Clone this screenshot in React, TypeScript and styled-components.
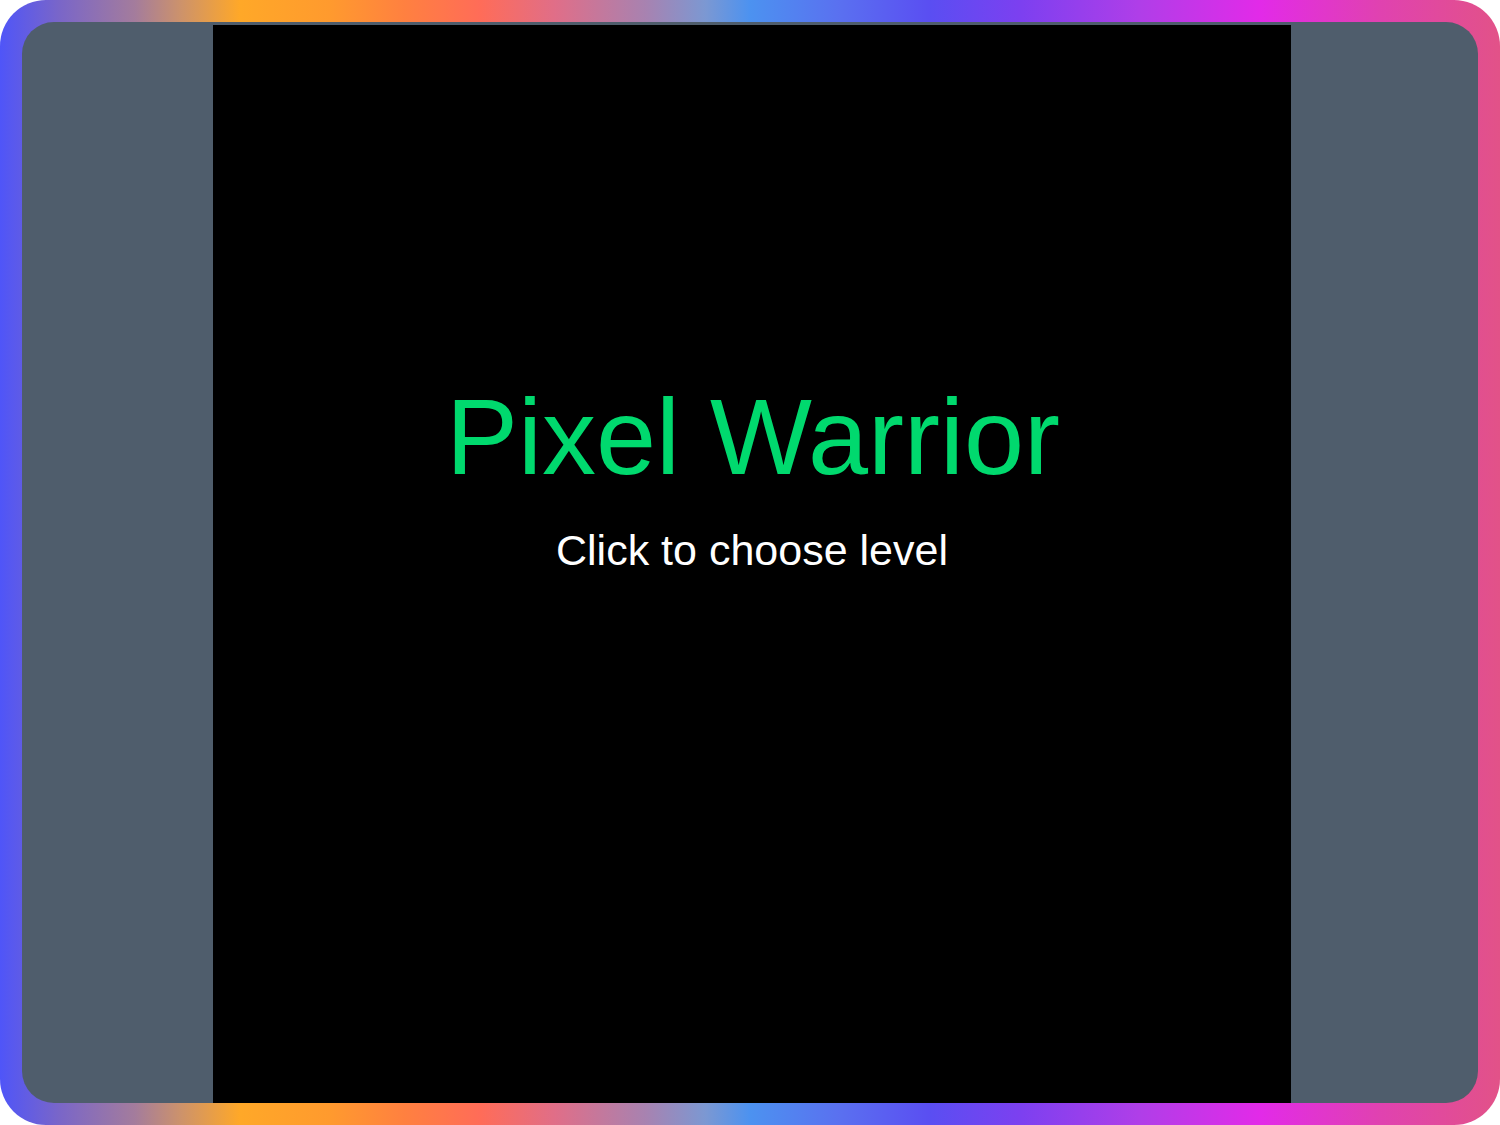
import React from "react";
import styled, { createGlobalStyle } from "styled-components";

const GlobalStyle = createGlobalStyle`
  html, body {
    margin: 0;
    padding: 0;
    background: #ffffff;
  }
`;

function App() {
  return (
    <>
      <GlobalStyle />
      <Frame>
        <Panel>
          <GameCanvas>
            <Title>Pixel Warrior</Title>
            <Subtitle>Click to choose level</Subtitle>
          </GameCanvas>
        </Panel>
      </Frame>
    </>
  );
}

const Frame = styled.div`
  box-sizing: border-box;
  width: 1500px;
  height: 1125px;
  padding: 22px;
  border-radius: 46px;
  background: linear-gradient(
    90deg,
    #4f55f8 0%,
    #7a66c8 4%,
    #a47c9c 9%,
    #cc926c 12%,
    #ffa828 16%,
    #ff9a2e 22%,
    #ff8040 27%,
    #ff6c58 32%,
    #e06e88 37%,
    #a882b0 43%,
    #7c98d2 47%,
    #4c92f0 50%,
    #5a70f0 56%,
    #5a4ef2 62%,
    #7c40f0 68%,
    #b03ee8 76%,
    #e22ae8 84%,
    #e042b0 92%,
    #e25288 100%
  );
`;

const Panel = styled.div`
  box-sizing: border-box;
  height: 100%;
  padding-top: 3px;
  border-radius: 32px;
  background: #4f5d6c;
  display: flex;
  justify-content: center;
  overflow: hidden;
`;

const GameCanvas = styled.div`
  box-sizing: border-box;
  width: 1078px;
  height: 1078px;
  margin-left: 4px;
  padding-top: 358px;
  background: #000000;
  display: flex;
  flex-direction: column;
  align-items: center;
  font-family: "Liberation Sans", Arial, sans-serif;
`;

const Title = styled.h1`
  margin: 0 0 0 2px;
  font-size: 108px;
  font-weight: 400;
  line-height: 1;
  color: #00d96e;
`;

const Subtitle = styled.p`
  margin: 38px 0 0 0;
  font-size: 43px;
  line-height: 1;
  color: #ffffff;
`;

export default App;
